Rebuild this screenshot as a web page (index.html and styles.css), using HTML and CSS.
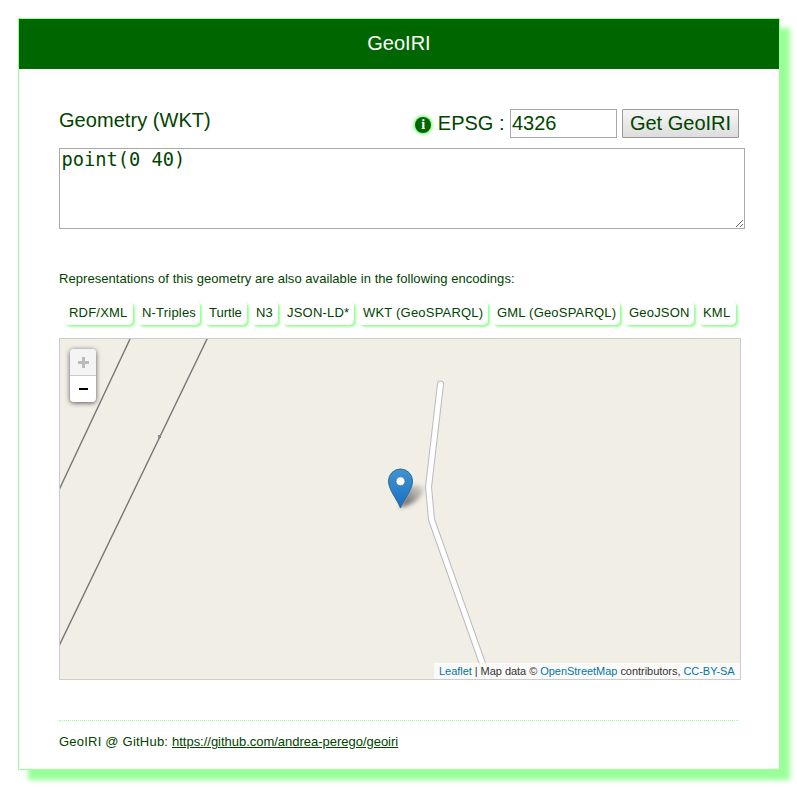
FILE: index.html
```html
<!DOCTYPE html>
<html lang="en">
<head>
<meta charset="utf-8">
<title>GeoIRI</title>
<link rel="stylesheet" href="styles.css">
</head>
<body>
<div class="card">
  <header><h1>GeoIRI</h1></header>
  <main>
    <form>
      <div class="bar">
        <label class="geometry" for="wkt">Geometry (WKT)</label>
        <span class="info">i</span>
        <label class="epsg" for="epsg">EPSG :</label>
        <input id="epsg" type="text" value="4326">
        <button type="button">Get GeoIRI</button>
      </div>
      <textarea id="wkt" spellcheck="false">point(0 40)</textarea>
    </form>
    <p class="intro"><span>Representations of this geometry are also available in the following encodings:</span></p>
    <nav>
      <a>RDF/XML</a><a>N-Triples</a><a>Turtle</a><a>N3</a><a>JSON-LD*</a><a>WKT (GeoSPARQL)</a><a>GML (GeoSPARQL)</a><a>GeoJSON</a><a>KML</a>
    </nav>
    <div class="map">
      <svg class="tiles" viewBox="60 339 680 340" width="680" height="340">
        <defs>
          <linearGradient id="pin" x1="0" y1="0" x2="0" y2="1"><stop offset="0" stop-color="#4394d0"/><stop offset="1" stop-color="#176fc1"/></linearGradient>
          <filter id="soft" x="-50%" y="-50%" width="200%" height="200%"><feGaussianBlur stdDeviation="2"/></filter>
          <linearGradient id="shade" x1="0" y1="1" x2="1" y2="0"><stop offset="0" stop-color="#000" stop-opacity=".65"/><stop offset="1" stop-color="#000" stop-opacity=".05"/></linearGradient>
        </defs>
        <path class="rail" d="M130.5 338 L59 490 M207.5 338 L59 646"/>
        <rect x="158" y="435" width="3" height="3" fill="#888"/>
        <path class="road-edge" d="M440.500 384 L428.500 487 L431.500 519.500 L489 682"/>
        <path class="road" d="M440.500 384 L428.500 487 L431.500 519.500 L489 682"/>
        <path d="M400 508 L407 490 Q414 482 424 487 Q424 497 411 504Z" fill="url(#shade)" filter="url(#soft)"/>
        <path d="M400.500 508 C397 499 388.500 490 388.500 481 A12 12 0 0 1 412.500 481 C412.500 490 404 499 400.500 508Z" fill="url(#pin)" stroke="#2e6c97"/>
        <circle cx="400.500" cy="481.300" r="4.500" fill="#fff" stroke="#2e6c97" stroke-width=".7"/>
      </svg>
      <div class="zoom"><span class="off"><i class="plus"></i></span><span><i></i></span></div>
      <div class="credit"><span><a>Leaflet</a> | Map data © <a>OpenStreetMap</a> contributors, <a>CC-BY-SA</a></span></div>
    </div>
    <footer><span>GeoIRI @ GitHub: </span><a>https://github.com/andrea-perego/geoiri</a></footer>
  </main>
</div>
</body>
</html>
```
FILE: styles.css
```css
* { box-sizing: border-box; }
body { margin: 0; padding: 18px; background: #fff; color: #040; font: 13px/15px "Liberation Sans", Arial, sans-serif; }
.card { width: 762px; height: 752px; border: 1px solid #9f9; background: #fff; box-shadow: 10px 10px 5px #9f9; }
header { height: 50px; background: #060; color: #fff; text-align: center; }
h1 { margin: 0; font-size: 20px; font-weight: normal; line-height: 48px; }
main { padding: 40px; }
.bar { display: flex; height: 29px; width: 680px; font-size: 20px; line-height: 28px; }
.geometry { margin-right: auto; line-height: 23px; letter-spacing: .05px; }
.info { width: 16px; height: 16px; margin: 8px 6.5px 0 0; border-radius: 50%; background: #060; box-shadow: 0 0 2px 2px #9f9; color: #fff; font: bold 14px/16px "Liberation Serif", serif; text-align: center; }
.epsg { margin-right: 5.5px; }
input { width: 107px; height: 29px; margin: 0 5px 0 0; padding: 1px; border: 1px solid #a9a9a9; color: #040; font: 20px "Liberation Sans", Arial, sans-serif; }
button { width: 117px; height: 29px; padding: 0; border: 1px solid #999; border-radius: 1px; background: linear-gradient(#f6f6f6, #ddd); color: #040; font: 20px "Liberation Sans", Arial, sans-serif; white-space: nowrap; }
textarea { display: block; width: 686px; height: 81px; margin: 10px 0 0; padding: 0 1.5px; border: 1px solid #a9a9a9; color: #040; font: 18.7px/22px "DejaVu Sans Mono", monospace; resize: vertical; overflow: hidden; }
.intro { margin: 42px 0 0; white-space: nowrap; letter-spacing: .05px; }
nav { display: grid; grid-template-columns: 69px 63px 43px 27px 72px 130px 128px 70px 38px; gap: 4px; margin: 15px 0 0 5px; letter-spacing: .2px; }
nav a { height: 24px; padding: 4px 0 0 5px; border-radius: 5px; box-shadow: 2px 2px 2px #9f9; white-space: nowrap; }
nav a:nth-child(3), nav a:nth-child(4) { letter-spacing: 0; }
.map { position: relative; width: 682px; height: 342px; margin-top: 13px; border: 1px solid #ccc; background: #f1eee6; }
.tiles { display: block; }
.rail { fill: none; stroke: #777; stroke-width: 1.4; }
.road-edge, .road { fill: none; stroke-linecap: round; stroke-linejoin: round; }
.road-edge { stroke: #bbb; stroke-width: 7; }
.road { stroke: #fff; stroke-width: 5; }
.zoom { position: absolute; left: 10px; top: 10px; width: 26px; height: 53px; border-radius: 4px; background: #fff; box-shadow: 0 1px 5px rgba(0,0,0,.65); }
.zoom span { display: grid; place-items: center; height: 26px; }
.zoom .off { height: 27px; border-bottom: 1px solid #ccc; border-radius: 4px 4px 0 0; background: #f4f4f4; }
.zoom i { width: 9px; height: 2px; margin: 0 0 0 1px; background: #000; }
.zoom .plus { width: 11px; height: 11px; margin: 0; background: linear-gradient(#bbb, #bbb) center / 11px 3px no-repeat, linear-gradient(#bbb, #bbb) center / 3px 11px no-repeat; }
.credit { position: absolute; right: 0; bottom: 0; width: 306px; height: 16px; padding: 0 5px; background: rgba(255,255,255,.7); color: #333; font-size: 11px; line-height: 16px; letter-spacing: -.04px; white-space: nowrap; }
.credit a { color: #0078a8; }
footer { width: 680px; margin-top: 40px; padding-top: 13px; border-top: 1px dotted #9f9; }
footer span { letter-spacing: .22px; }
footer a { text-decoration: underline; letter-spacing: -.02px; }
```
